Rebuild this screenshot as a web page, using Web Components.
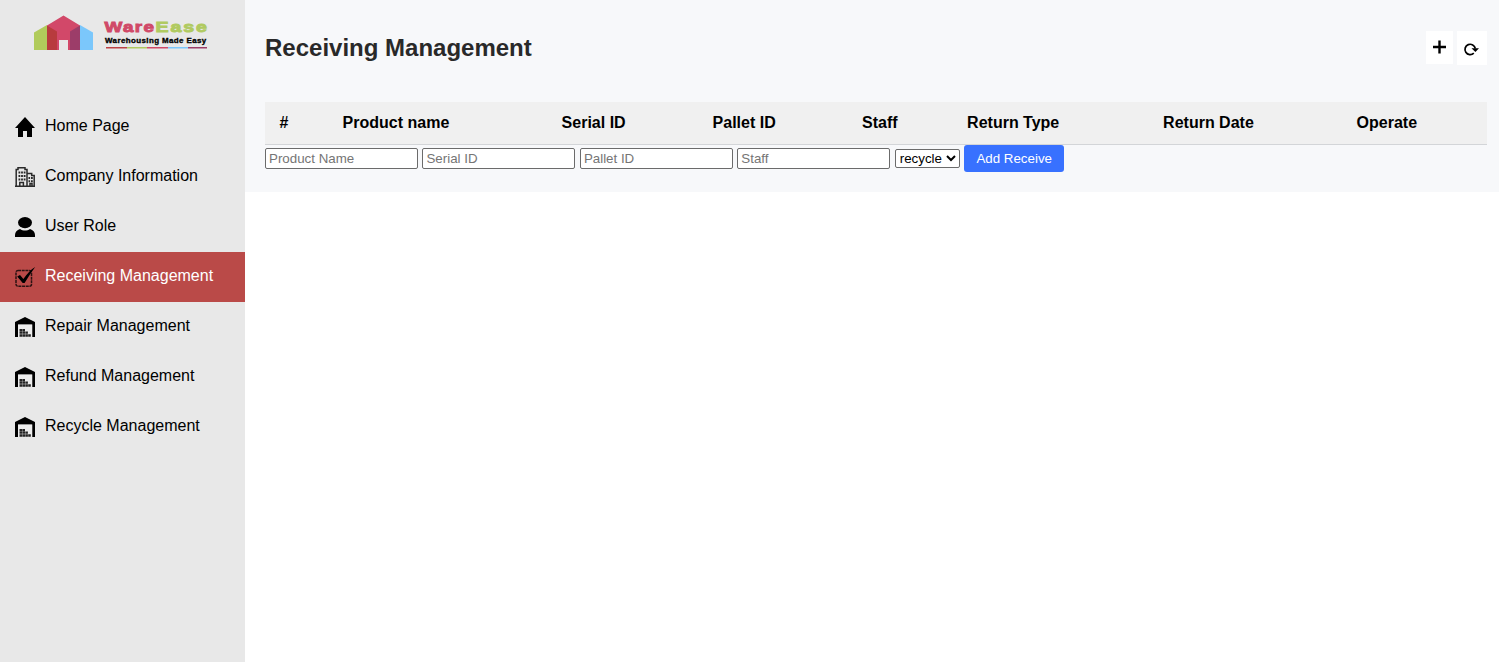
<!DOCTYPE html>
<html lang="en"><head><meta charset="utf-8"><title>WareEase</title>
<style>body{margin:0;background:#fff;font-family:"Liberation Sans",Arial,sans-serif;font-size:16px;color:#000}</style></head>
<body><ware-app></ware-app>
<script>
const define=(name,html,setup)=>customElements.define(name,class extends HTMLElement{
  constructor(){super();const t=document.createElement('template');t.innerHTML=html;this.attachShadow({mode:'open'}).append(t.content.cloneNode(true));}
  connectedCallback(){if(setup)setup(this,this.shadowRoot);}
});
const icons={
home:'<path d="M10 0 20 11h-3v9h-5v-6H8v6H3v-9H0Z"/>',
company:'<g fill="none" stroke="#292929" stroke-width="1.5"><path d="M1.200 19.200V2.500H3V.8h7v1.700h2v16.700M12.500 6.500h4.200v2h2.500v10.700M0 19.300h20M4.800 19v-3.600h3.600V19M15 19v-2.600h2V19"/></g><path fill="#292929" d="M3.500 4.500h1.800v2H3.500Zm2.600 0h1.800v2H6.100Zm2.600 0h1.800v2H8.700ZM3.500 8h1.800v2H3.500Zm2.600 0h1.800v2H6.100Zm2.600 0h1.800v2H8.700ZM3.500 11.500h1.800v2H3.500Zm2.600 0h1.800v2H6.100Zm2.600 0h1.800v2H8.700ZM13.500 10h1.600v2h-1.600Zm2.500 0h1.800v2H16ZM13.500 13.200h1.600v2h-1.600Zm2.500 0h1.800v2H16Z"/>',
user:'<ellipse cx="10" cy="5.600" rx="7" ry="5.600"/><path d="M0 20v-2c0-3 2-5 5-6 3 2 7 2 10 0 3 1 5 3 5 6v2Z"/>',
receive:'<rect x="1" y="3.500" width="15.500" height="15.700" rx="2" fill="none" stroke="#2b1212" stroke-width="1.500" stroke-dasharray="3 .7"/><path d="M2.200 9.500 5 8 8.400 12C11.800 7 15.500 2.800 20.200 0 16.800 5 12.700 10.500 9.600 16H7.700Z"/>',
warehouse:'<path d="M10 0 20 5v15h-2.800V7.500H3V20H0V5Z"/><path d="M3 7.500h14.200V20H3Z" fill="#f0f0f0" opacity=".55"/><path fill="#222" d="M4.500 12h2.600v2.200H4.500Zm2.900 0h2.600v2.200H7.400ZM4.500 14.600h2.600v2.200H4.500Zm2.900 0h2.600v2.200H7.400Zm2.900 0h2.600v2.200H10.300ZM4.500 17.200h2.600v2.500H4.500Zm2.900 0h2.600v2.500H7.400Zm2.900 0h2.600v2.500H10.300Zm2.900 0h2.600v2.500H13.200Z"/>'};
define('ware-logo',`<style>:host{display:block;height:102px}svg{display:block;font-family:"Liberation Sans",Arial,sans-serif;font-weight:bold}</style>
<svg width="245" height="60" viewBox="0 0 245 60">
<path fill="#b1cb5b" d="M34 32.500 47 25v25H34Z"/><path fill="#7bc7fb" d="M80 25 93 32.500V50H80Z"/>
<path fill="#d24869" d="M47 25.500 63.500 15.500 80 25.500V50H68V40H59V50H47Z"/>
<path fill="#b83b3e" d="M47 25.500 57 31.500V50H47Z"/><path fill="#9c3d69" d="m70 31.500 10-6V50H70Z"/>
<g font-size="14.500" stroke-width=".9"><text transform="translate(104.500 32) scale(1.300 1)" textLength="38" lengthAdjust="spacing" fill="#d04968" stroke="#d04968">Ware</text><text transform="translate(155.500 32) scale(1.350 1)" textLength="38" lengthAdjust="spacing" fill="#b0ca60" stroke="#b0ca60">Ease</text></g>
<text transform="translate(105 43) scale(1.220 1)" font-size="6.500" textLength="83" lengthAdjust="spacing" stroke="#000" stroke-width=".3">Warehousing Made Easy</text>
<g><path fill="#bd4144" d="M106 47h21v1.500h-21Z"/><path fill="#b0ca60" d="M127 47h20v1.500h-20Z"/><path fill="#d04968" d="M147 47h21v1.500h-21Z"/><path fill="#7bc7fb" d="M168 47h20v1.500h-20Z"/><path fill="#9c3d69" d="M188 47h19v1.500h-19Z"/></g></svg>`);
define('nav-item',`<style>:host{display:flex;box-sizing:border-box;height:50px;padding:0 15px;gap:10px;white-space:nowrap}:host([active]){background:#ba4a48;color:#fff}svg{width:20px;height:20px;margin-top:15px;flex:none;overflow:visible}span{line-height:18px;margin-top:15px}</style><svg viewBox="0 0 20 20"></svg><span><slot></slot></span>`,(h,r)=>{r.querySelector('svg').innerHTML=icons[h.getAttribute('icon')];});
define('side-bar',`<style>:host{display:block;width:245px;background:#e8e8e8}</style><ware-logo></ware-logo><nav><nav-item icon="home">Home Page</nav-item><nav-item icon="company">Company Information</nav-item><nav-item icon="user">User Role</nav-item><nav-item icon="receive" active>Receiving Management</nav-item><nav-item icon="warehouse">Repair Management</nav-item><nav-item icon="warehouse">Refund Management</nav-item><nav-item icon="warehouse">Recycle Management</nav-item></nav>`);
define('page-head',`<style>:host{display:flex;justify-content:space-between;height:102px;box-sizing:border-box;padding-top:31px}h1{margin:3px 0 0;font-size:24px;line-height:28px;color:#292929}div{display:flex;gap:4px}button{border:0;padding:0;background:#fff;display:block;color:#000}.add{width:27px;height:33px}.refresh{width:30px;height:34px}svg{display:block;margin:auto}</style><h1><slot></slot></h1><div><button class="add" aria-label="Add"><svg width="27" height="33"><path d="M7 16h13M13.500 9.500v13" stroke="#000" stroke-width="2.400"/></svg></button><button class="refresh" aria-label="Refresh"><svg width="30" height="34"><path d="M16.800 22.200A5.200 5.200 0 1 1 18.300 17.500" fill="none" stroke="#000" stroke-width="1.700"/><path d="M14.500 17.200h7.500l-3.600 3.800Z"/></svg></button></div>`);
define('table-head',`<style>:host{display:grid;grid-template-columns:63px 219px 151px 149.500px 105px 196px 193.500px 1fr;height:43px;box-sizing:border-box;padding-left:14.600px;border-bottom:1px solid #d3d5d8;background:#f0f0f0;font-weight:bold;line-height:42px;white-space:nowrap}</style><span>#</span><span>Product name</span><span>Serial ID</span><span>Pallet ID</span><span>Staff</span><span>Return Type</span><span>Return Date</span><span>Operate</span>`);
define('receive-form',`<style>:host{display:flex;height:27px;align-items:center;gap:4.450px}input,select,button{box-sizing:border-box;margin:0;font:13.333px "Liberation Sans",Arial,sans-serif}input{width:153px;height:21px;padding:1px 3px;border:1px solid #6b6b6b;border-radius:2px;background:#fff}input::placeholder{color:#757575}select{width:65px;height:19px;padding:0;border:1px solid #6b6b6b;border-radius:2px;background:#fff;color:#000}button{width:100px;height:27px;padding:0;border:0;border-radius:3px;background:#3871ff;color:#fff}</style><input placeholder="Product Name"><input placeholder="Serial ID"><input placeholder="Pallet ID"><input placeholder="Staff"><select><option>recycle</option></select><button>Add Receive</button>`);
define('ware-app',`<style>:host{display:grid;grid-template-columns:245px 1fr;height:100vh}main{align-self:start;height:192px;box-sizing:border-box;padding:0 12px 20px 20px;background:#f7f8fa}</style><side-bar></side-bar><main><page-head>Receiving Management</page-head><table-head></table-head><receive-form></receive-form></main>`);
</script></body></html>
